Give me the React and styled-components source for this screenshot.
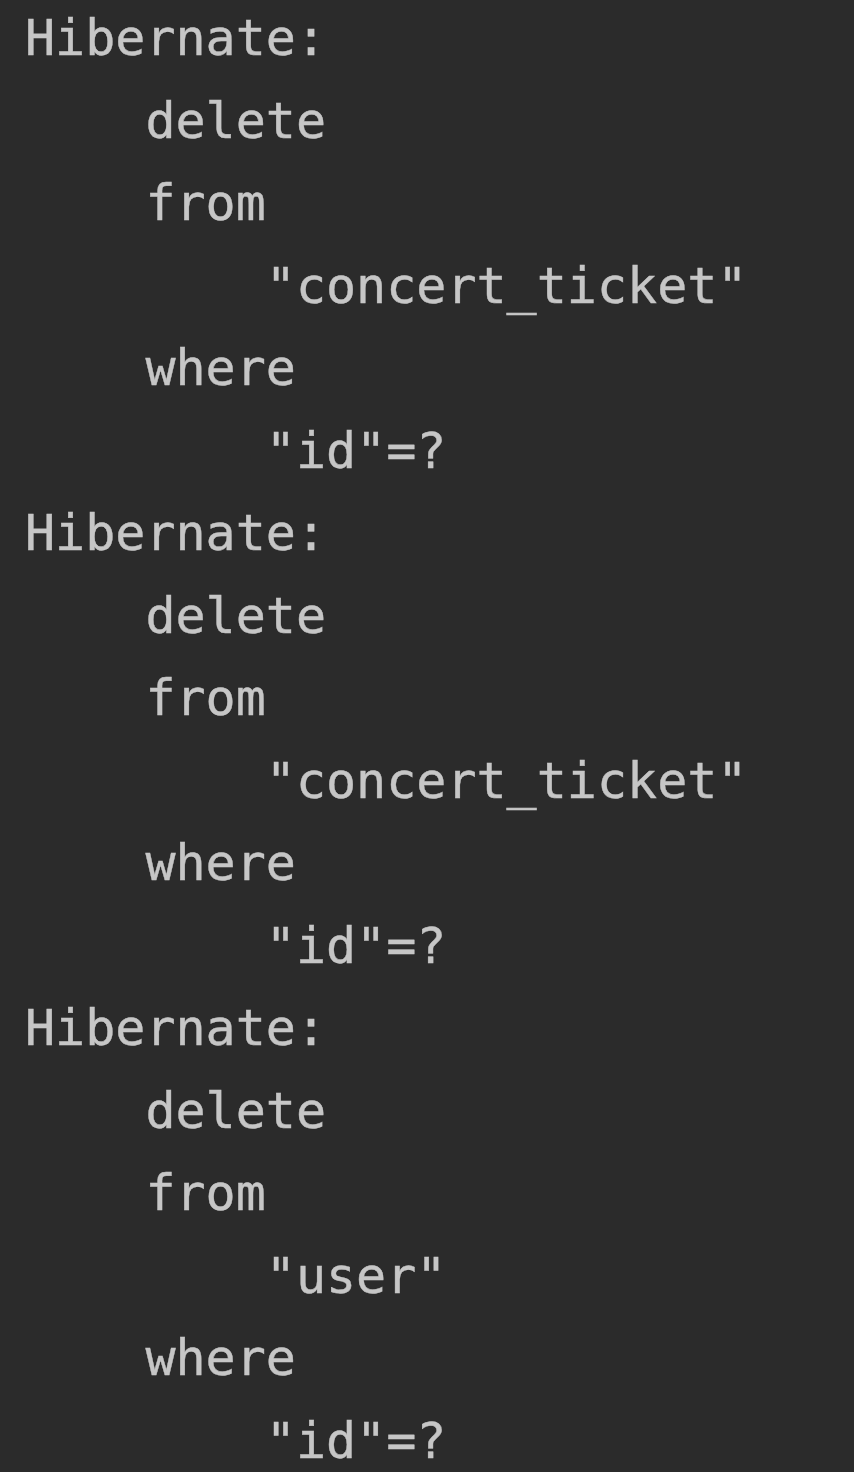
import React from "react";
import styled, { createGlobalStyle } from "styled-components";

const Global = createGlobalStyle`
  html, body {
    margin: 0;
    padding: 0;
    background: #2b2b2b;
  }
`;

const Console = styled.div`
  width: 854px;
  height: 1472px;
  overflow: hidden;
  background: #2b2b2b;
  box-sizing: border-box;
  padding: 0 0 0 25px;
`;

const Log = styled.pre`
  margin: -3px 0 0;
  font-family: "DejaVu Sans Mono", "Liberation Mono", monospace;
  font-size: 50px;
  line-height: 82.5px;
  color: #c6c6c6;
  white-space: pre;
  -webkit-text-stroke: 0.4px #c6c6c6;
`;

const Line = styled.div`
  padding-left: ${({ $indent }) => $indent * 30.1}px;
`;

const statement = (table) => [
  ["Hibernate:", 0],
  ["delete", 4],
  ["from", 4],
  [`"${table}"`, 8],
  ["where", 4],
  ['"id"=?', 8],
];

const lines = [
  ...statement("concert_ticket"),
  ...statement("concert_ticket"),
  ...statement("user"),
];

export default function App() {
  return (
    <>
      <Global />
      <Console>
        <Log>
          {lines.map(([text, indent], i) => (
            <Line key={i} $indent={indent}>
              {text}
            </Line>
          ))}
        </Log>
      </Console>
    </>
  );
}
